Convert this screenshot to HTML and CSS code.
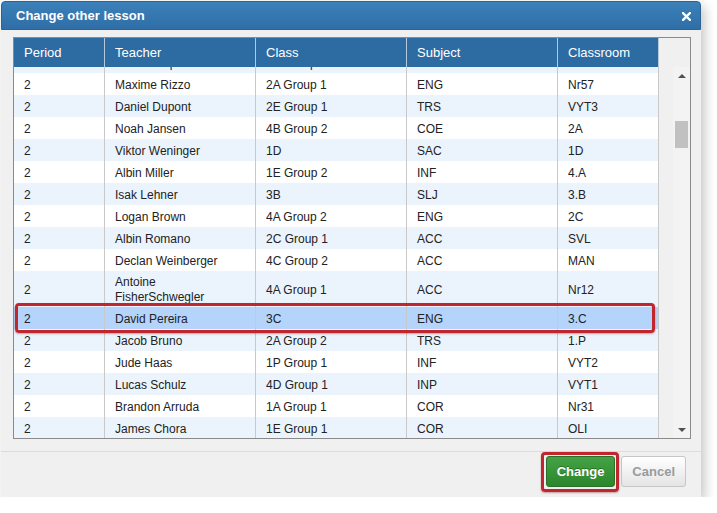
FILE: index.html
```html
<!DOCTYPE html>
<html>
<head>
<meta charset="utf-8">
<title>Change other lesson</title>
<link rel="stylesheet" href="styles.css">
</head>
<body>
<div class="dialog">
  <div class="titlebar">
    <span class="title">Change other lesson</span>
    <svg class="close" width="9" height="9" viewBox="0 0 9 9"><path d="M1 1 L8 8 M8 1 L1 8" stroke="#fff" stroke-width="2.4" stroke-linecap="square"/></svg>
  </div>
  <div class="content">
    <div class="gridbox">
      <div class="pane">
        <div class="row head">
          <div class="cell">Period</div>
          <div class="cell">Teacher</div>
          <div class="cell">Class</div>
          <div class="cell">Subject</div>
          <div class="cell">Classroom</div>
        </div>
        <div class="rows">
          <div class="rows-inner">
            <div class="row alt"><div class="cell">2</div><div class="cell">Leon Kemp</div><div class="cell">3A Group 2</div><div class="cell">INF</div><div class="cell">Nr40</div></div>
            <div class="row"><div class="cell">2</div><div class="cell">Maxime Rizzo</div><div class="cell">2A Group 1</div><div class="cell">ENG</div><div class="cell">Nr57</div></div>
            <div class="row alt"><div class="cell">2</div><div class="cell">Daniel Dupont</div><div class="cell">2E Group 1</div><div class="cell">TRS</div><div class="cell">VYT3</div></div>
            <div class="row"><div class="cell">2</div><div class="cell">Noah Jansen</div><div class="cell">4B Group 2</div><div class="cell">COE</div><div class="cell">2A</div></div>
            <div class="row alt"><div class="cell">2</div><div class="cell">Viktor Weninger</div><div class="cell">1D</div><div class="cell">SAC</div><div class="cell">1D</div></div>
            <div class="row"><div class="cell">2</div><div class="cell">Albin Miller</div><div class="cell">1E Group 2</div><div class="cell">INF</div><div class="cell">4.A</div></div>
            <div class="row alt"><div class="cell">2</div><div class="cell">Isak Lehner</div><div class="cell">3B</div><div class="cell">SLJ</div><div class="cell">3.B</div></div>
            <div class="row"><div class="cell">2</div><div class="cell">Logan Brown</div><div class="cell">4A Group 2</div><div class="cell">ENG</div><div class="cell">2C</div></div>
            <div class="row alt"><div class="cell">2</div><div class="cell">Albin Romano</div><div class="cell">2C Group 1</div><div class="cell">ACC</div><div class="cell">SVL</div></div>
            <div class="row"><div class="cell">2</div><div class="cell">Declan Weinberger</div><div class="cell">4C Group 2</div><div class="cell">ACC</div><div class="cell">MAN</div></div>
            <div class="row alt tall"><div class="cell">2</div><div class="cell"><span>Antoine<br>FisherSchwegler</span></div><div class="cell">4A Group 1</div><div class="cell">ACC</div><div class="cell">Nr12</div></div>
            <div class="row selected"><div class="cell">2</div><div class="cell">David Pereira</div><div class="cell">3C</div><div class="cell">ENG</div><div class="cell">3.C</div></div>
            <div class="row alt"><div class="cell">2</div><div class="cell">Jacob Bruno</div><div class="cell">2A Group 2</div><div class="cell">TRS</div><div class="cell">1.P</div></div>
            <div class="row"><div class="cell">2</div><div class="cell">Jude Haas</div><div class="cell">1P Group 1</div><div class="cell">INF</div><div class="cell">VYT2</div></div>
            <div class="row alt"><div class="cell">2</div><div class="cell">Lucas Schulz</div><div class="cell">4D Group 1</div><div class="cell">INP</div><div class="cell">VYT1</div></div>
            <div class="row"><div class="cell">2</div><div class="cell">Brandon Arruda</div><div class="cell">1A Group 1</div><div class="cell">COR</div><div class="cell">Nr31</div></div>
            <div class="row alt"><div class="cell">2</div><div class="cell">James Chora</div><div class="cell">1E Group 1</div><div class="cell">COR</div><div class="cell">OLI</div></div>
          </div>
        </div>
      </div>
      <div class="sidebar">
        <div class="side-head"></div>
        <div class="scrollbar">
          <div class="sb-btn"><span class="arrow-up"></span></div>
          <div class="sb-track"><span class="sb-thumb"></span></div>
          <div class="sb-btn"><span class="arrow-down"></span></div>
        </div>
      </div>
    </div>
  </div>
  <div class="footer">
    <span class="mark"><button class="btn btn-primary">Change</button></span>
    <button class="btn btn-default">Cancel</button>
  </div>
</div>
</body>
</html>
```
FILE: styles.css
```css
html, body {
  margin: 0;
  padding: 0;
  background: #ffffff;
  font-family: "Liberation Sans", Arial, sans-serif;
}

.dialog {
  margin: 1px 0 0 1px;
  width: 700px;
  height: 496px;
  box-sizing: border-box;
  background: #f0f0f0;
  border-radius: 4px 4px 0 0;
  box-shadow: 4px 5px 12px rgba(0, 0, 0, 0.22);
  display: flex;
  flex-direction: column;
}

.titlebar {
  height: 29px;
  box-sizing: border-box;
  background: linear-gradient(#3c81ba, #2f6ea6);
  border: 1px solid #2b6398;
  border-radius: 4px 4px 0 0;
  display: flex;
  align-items: center;
  justify-content: space-between;
  padding: 0 9px 0 14px;
}

.title {
  color: #ffffff;
  font-size: 13px;
  font-weight: bold;
}

.close {
  display: block;
  margin-top: 1px;
}

.content {
  padding: 7px 10px 12px 12px;
}

.gridbox {
  border: 1px solid #8a8a8a;
  height: 400px;
  display: flex;
  background: #f0f0f0;
}

.pane {
  width: 645px;
  display: flex;
  flex-direction: column;
}

.row {
  display: grid;
  grid-template-columns: 91px 151px 151px 151px 101px;
  background: #ffffff;
}

.row.alt {
  background: #ebf4fc;
}

.row.selected {
  background: #b4d4fb;
  position: relative;
}

.row.selected::after {
  content: "";
  position: absolute;
  top: -4px;
  bottom: -4px;
  left: 1px;
  right: 4px;
  border: 3px solid #c0262e;
  border-radius: 4px;
  box-shadow: 0 1px 2px rgba(120, 0, 0, 0.35);
}

.cell {
  box-sizing: border-box;
  border-right: 1px solid #c9c9c9;
  padding: 5px 8px 2px 10px;
  font-size: 12px;
  line-height: 15px;
  color: #222222;
  display: flex;
  align-items: center;
}

.row.tall .cell {
  padding-top: 4px;
}

.row.head {
  background: #2d6ca3;
  height: 29px;
}

.row.head .cell {
  color: #ffffff;
  font-size: 13px;
  line-height: 29px;
  padding-top: 0;
  padding-bottom: 0;
  border-right-color: #b8c8d8;
}

.rows {
  height: 371px;
  overflow: hidden;
}

.rows-inner {
  margin-top: -16px;
}

.sidebar {
  flex: 1;
  display: flex;
  flex-direction: column;
  align-items: flex-end;
}

.side-head {
  height: 29px;
}

.scrollbar {
  width: 17px;
  flex: 1;
  display: flex;
  flex-direction: column;
  background: #f3f3f3;
}

.sb-btn {
  height: 17px;
  display: flex;
  align-items: center;
  justify-content: center;
}

.arrow-up {
  width: 0;
  height: 0;
  border-left: 4px solid transparent;
  border-right: 4px solid transparent;
  border-bottom: 4px solid #505050;
}

.arrow-down {
  width: 0;
  height: 0;
  border-left: 4px solid transparent;
  border-right: 4px solid transparent;
  border-top: 4px solid #505050;
}

.sb-track {
  flex: 1;
  padding-top: 37px;
  display: flex;
  justify-content: center;
}

.sb-thumb {
  width: 13px;
  height: 27px;
  background: #c1c1c1;
}

.footer {
  border-top: 1px solid #dcdcdc;
  padding: 4px 15px 0 0;
  display: flex;
  justify-content: flex-end;
  align-items: flex-start;
  gap: 6px;
}

.mark {
  position: relative;
  display: block;
}

.mark::after {
  content: "";
  position: absolute;
  top: -4px;
  right: -4px;
  bottom: -5px;
  left: -5px;
  border: 3px solid #c0262e;
  border-radius: 4px;
  box-shadow: 0 1px 2px rgba(120, 0, 0, 0.35);
}

.btn {
  display: block;
  height: 31px;
  padding: 0 10px;
  font-family: "Liberation Sans", Arial, sans-serif;
  font-size: 13px;
  font-weight: bold;
  border-radius: 3px;
  margin: 0;
}

.btn-primary {
  color: #ffffff;
  background: linear-gradient(#44a344, #2c862c);
  border: 1px solid #2a6f2a;
  text-shadow: 0 -1px 0 rgba(0, 0, 0, 0.3);
}

.btn-default {
  color: #9a9a9a;
  background: linear-gradient(#ffffff, #e4e4e4);
  border: 1px solid #c6c6c6;
}
```
